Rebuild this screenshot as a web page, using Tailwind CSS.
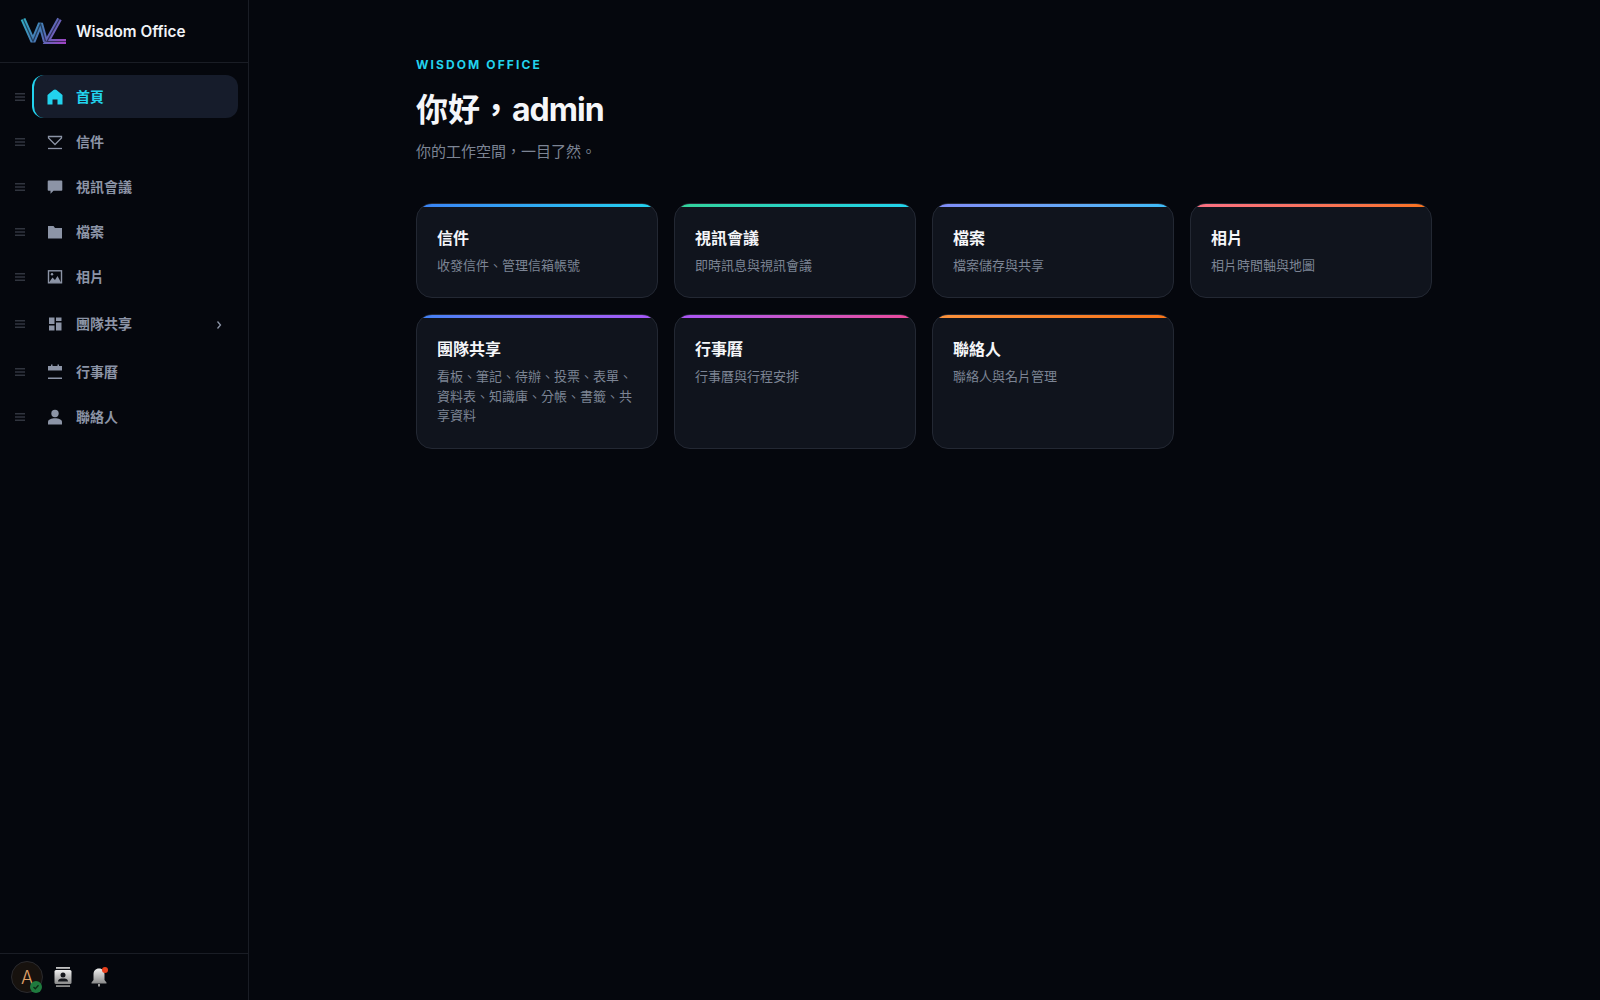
<!DOCTYPE html>
<html lang="zh-Hant">
<head>
    <meta charset="UTF-8">
    <title>Wisdom Office</title>
    <script src="https://cdn.jsdelivr.net/npm/@tailwindcss/browser@4"></script>
</head>
<body class="bg-[#05070d] font-['Inter','Noto_Sans_CJK_TC',sans-serif] h-[1000px] overflow-hidden flex">
    <!-- 側邊欄 -->
    <aside class="w-[249px] h-full shrink-0 border-r border-[#1a1d25] flex flex-col">
        <div class="h-[63px] border-b border-[#1a1d25] flex items-center pl-[20px] gap-[10px]">
            <svg class="w-[46px] h-[28px]" viewBox="0 0 46 28" fill="none">
                <defs>
                    <linearGradient id="logo" x1="0" y1="0" x2="46" y2="28" gradientUnits="userSpaceOnUse">
                        <stop offset="0" stop-color="#2fb3c4"/>
                        <stop offset="0.5" stop-color="#4a74b4"/>
                        <stop offset="1" stop-color="#a63fc4"/>
                    </linearGradient>
                </defs>
                <path d="M3 2L13 24.500L20.500 6.500L25.500 24.500" stroke="url(#logo)" stroke-width="5" stroke-linejoin="bevel"/>
                <path d="M39.500 2L27 24.500H46" stroke="url(#logo)" stroke-width="5" stroke-linejoin="miter"/>
                <path d="M3 2L13 24.500L20.500 6.500L25.500 24.500" stroke="#0b0f1a" stroke-opacity="0.6" stroke-width="1.200" stroke-linejoin="bevel"/>
                <path d="M39.500 2L27 24.500H46" stroke="#0b0f1a" stroke-opacity="0.6" stroke-width="1.200" stroke-linejoin="miter"/>
            </svg>
            <span class="text-[15.300px] font-semibold text-[#f1f3f7] translate-y-[1px]">Wisdom Office</span>
        </div>

        <nav class="flex flex-col pt-[12px] gap-[2px]">
            <!-- 首頁 -->
            <div class="flex items-center h-[43px]">
                <svg class="w-[32px] h-[12px] shrink-0 text-[#31353f]" viewBox="0 0 32 12" fill="currentColor"><rect x="15" y="2" width="10" height="1.500"/><rect x="15" y="5.250" width="10" height="1.500"/><rect x="15" y="8.500" width="10" height="1.500"/></svg>
                <a class="w-[206px] h-[43px] rounded-[12px] bg-[#161c2b] border-l-2 border-[#22d3ee] flex items-center pl-[12px] gap-[12px] text-[14px] font-semibold text-[#22d3ee]">
                    <svg class="w-[18px] h-[18px]" viewBox="0 0 18 18" fill="currentColor"><path d="M9 1.500C8.500 1.500 8 1.700 7.500 2.100L1.500 7V16.500H6.500V11.500H11.500V16.500H16.500V7L10.500 2.100C10 1.700 9.500 1.500 9 1.500Z"/></svg>
                    首頁
                </a>
            </div>
            <!-- 信件 -->
            <div class="flex items-center h-[43px]">
                <svg class="w-[32px] h-[12px] shrink-0 text-[#31353f]" viewBox="0 0 32 12" fill="currentColor"><rect x="15" y="2" width="10" height="1.500"/><rect x="15" y="5.250" width="10" height="1.500"/><rect x="15" y="8.500" width="10" height="1.500"/></svg>
                <a class="w-[206px] h-[43px] flex items-center pl-[14px] gap-[12px] text-[14px] font-semibold text-[#8c94a6]">
                    <svg class="w-[18px] h-[18px]" viewBox="0 0 18 18" fill="none" stroke="currentColor" stroke-width="1.300"><path d="M2.500 3.500H15.500V5L9 11.500L2.500 5Z"/><path d="M2 15.500H16"/></svg>
                    信件
                </a>
            </div>
            <!-- 視訊會議 -->
            <div class="flex items-center h-[43px]">
                <svg class="w-[32px] h-[12px] shrink-0 text-[#31353f]" viewBox="0 0 32 12" fill="currentColor"><rect x="15" y="2" width="10" height="1.500"/><rect x="15" y="5.250" width="10" height="1.500"/><rect x="15" y="8.500" width="10" height="1.500"/></svg>
                <a class="w-[206px] h-[43px] flex items-center pl-[14px] gap-[12px] text-[14px] font-semibold text-[#8c94a6]">
                    <svg class="w-[18px] h-[18px]" viewBox="0 0 18 18" fill="currentColor"><path d="M2.500 2.500H15.500C16 2.500 16.300 2.800 16.300 3.300V12C16.300 12.500 16 12.800 15.500 12.800H7.500L4.500 15.800V12.800H2.500C2 12.800 1.700 12.500 1.700 12V3.300C1.700 2.800 2 2.500 2.500 2.500Z"/></svg>
                    視訊會議
                </a>
            </div>
            <!-- 檔案 -->
            <div class="flex items-center h-[43px]">
                <svg class="w-[32px] h-[12px] shrink-0 text-[#31353f]" viewBox="0 0 32 12" fill="currentColor"><rect x="15" y="2" width="10" height="1.500"/><rect x="15" y="5.250" width="10" height="1.500"/><rect x="15" y="8.500" width="10" height="1.500"/></svg>
                <a class="w-[206px] h-[43px] flex items-center pl-[14px] gap-[12px] text-[14px] font-semibold text-[#8c94a6]">
                    <svg class="w-[18px] h-[18px]" viewBox="0 0 18 18" fill="currentColor"><path d="M2 3H7.500L9 5H16V15.500H2Z"/></svg>
                    檔案
                </a>
            </div>
            <!-- 相片 -->
            <div class="flex items-center h-[43px]">
                <svg class="w-[32px] h-[12px] shrink-0 text-[#31353f]" viewBox="0 0 32 12" fill="currentColor"><rect x="15" y="2" width="10" height="1.500"/><rect x="15" y="5.250" width="10" height="1.500"/><rect x="15" y="8.500" width="10" height="1.500"/></svg>
                <a class="w-[206px] h-[43px] flex items-center pl-[14px] gap-[12px] text-[14px] font-semibold text-[#8c94a6]">
                    <svg class="w-[18px] h-[18px]" viewBox="0 0 18 18" fill="none"><rect x="2.500" y="2.800" width="13" height="12" stroke="currentColor" stroke-width="1.400"/><path d="M3 14.500L6.500 9.500L9 12L11.500 8L15 14.500Z" fill="currentColor"/><circle cx="6" cy="6.300" r="1.200" fill="currentColor"/></svg>
                    相片
                </a>
            </div>
            <!-- 團隊共享 -->
            <div class="flex items-center h-[46px] mt-[1px]">
                <svg class="w-[32px] h-[12px] shrink-0 text-[#31353f]" viewBox="0 0 32 12" fill="currentColor"><rect x="15" y="2" width="10" height="1.500"/><rect x="15" y="5.250" width="10" height="1.500"/><rect x="15" y="8.500" width="10" height="1.500"/></svg>
                <a class="w-[206px] h-[46px] flex items-center pl-[14px] pr-[15px] gap-[12px] text-[14px] leading-[20px] font-semibold text-[#8c94a6]">
                    <svg class="w-[18px] h-[18px]" viewBox="0 0 18 18" fill="currentColor"><rect x="3" y="2.500" width="5.500" height="6.500"/><rect x="3" y="10.500" width="5.500" height="5"/><rect x="10" y="2.500" width="5.500" height="3.500"/><rect x="10" y="7.500" width="5.500" height="8"/></svg>
                    <span>團隊共享</span>
                    <svg class="w-[8px] h-[10px] ml-auto translate-y-[1px]" viewBox="0 0 8 10" fill="none" stroke="currentColor" stroke-width="1.300"><path d="M2.500 1.500L5.500 5L2.500 8.500"/></svg>
                </a>
            </div>
            <!-- 行事曆 -->
            <div class="flex items-center h-[43px] mt-[1px]">
                <svg class="w-[32px] h-[12px] shrink-0 text-[#31353f]" viewBox="0 0 32 12" fill="currentColor"><rect x="15" y="2" width="10" height="1.500"/><rect x="15" y="5.250" width="10" height="1.500"/><rect x="15" y="8.500" width="10" height="1.500"/></svg>
                <a class="w-[206px] h-[43px] flex items-center pl-[14px] gap-[12px] text-[14px] font-semibold text-[#8c94a6]">
                    <svg class="w-[18px] h-[18px]" viewBox="0 0 18 18" fill="currentColor"><path d="M5 1.500H6.500V3H11.500V1.500H13V3H16V7.500H2V3H5Z"/><rect x="2" y="14.500" width="14" height="1.500"/></svg>
                    行事曆
                </a>
            </div>
            <!-- 聯絡人 -->
            <div class="flex items-center h-[43px]">
                <svg class="w-[32px] h-[12px] shrink-0 text-[#31353f]" viewBox="0 0 32 12" fill="currentColor"><rect x="15" y="2" width="10" height="1.500"/><rect x="15" y="5.250" width="10" height="1.500"/><rect x="15" y="8.500" width="10" height="1.500"/></svg>
                <a class="w-[206px] h-[43px] flex items-center pl-[14px] gap-[12px] text-[14px] font-semibold text-[#8c94a6]">
                    <svg class="w-[18px] h-[18px]" viewBox="0 0 18 18" fill="currentColor"><circle cx="9" cy="5.500" r="3.700"/><path d="M2 16.500V14C2 11.500 5.500 10.300 9 10.300C12.500 10.300 16 11.500 16 14V16.500Z"/></svg>
                    聯絡人
                </a>
            </div>
        </nav>

        <!-- 底部工具列 -->
        <div class="mt-auto h-[47px] border-t border-[#1a1d25] flex items-center pl-[11px]">
            <div class="relative w-[32px] h-[32px] rounded-full bg-[#17120e] border border-[#2a2a2e] flex items-center justify-center text-[18px] font-light text-[#e0a36a]">
                A
                <span class="absolute right-[0px] bottom-[-1px] w-[12px] h-[12px] rounded-full bg-[#1f7a3e] flex items-center justify-center">
                    <svg class="w-[8px] h-[8px]" viewBox="0 0 8 8" fill="none" stroke="#0c2a16" stroke-width="1.300"><path d="M1.500 4L3.300 5.800L6.500 2.200"/></svg>
                </span>
            </div>
            <svg class="w-[20px] h-[22px] ml-[10px]" viewBox="0 0 20 22" fill="none">
                <defs>
                    <linearGradient id="metal" x1="0" y1="0" x2="0" y2="1">
                        <stop offset="0" stop-color="#f0f0f0"/>
                        <stop offset="1" stop-color="#8a8a8a"/>
                    </linearGradient>
                </defs>
                <rect x="3" y="1" width="14" height="1.800" fill="#c4c4c4"/>
                <rect x="1.500" y="4" width="17" height="14" rx="1.500" fill="url(#metal)"/>
                <circle cx="10" cy="9" r="2.500" fill="#15171c"/>
                <path d="M5 15.500C5 13 7.500 12.500 10 12.500C12.500 12.500 15 13 15 15.500Z" fill="#15171c"/>
                <rect x="3" y="19.200" width="14" height="1.800" fill="#8a8a8a"/>
            </svg>
            <div class="relative w-[20px] h-[22px] ml-[16px]">
                <svg class="w-[20px] h-[22px]" viewBox="0 0 20 22">
                    <defs>
                        <linearGradient id="metal2" x1="0" y1="0" x2="0" y2="1">
                            <stop offset="0" stop-color="#f0f0f0"/>
                            <stop offset="1" stop-color="#8a8a8a"/>
                        </linearGradient>
                    </defs>
                    <path d="M10 2.500C6.500 2.500 4.500 5 4.500 8.500V14L2.500 16.500V17.500H17.500V16.500L15.500 14V8.500C15.500 5 13.500 2.500 10 2.500Z" fill="url(#metal2)"/>
                    <rect x="9" y="18" width="2" height="2.500" fill="#999"/>
                </svg>
                <span class="absolute right-[1px] top-[1px] w-[6px] h-[6px] rounded-full bg-[#e8401c]"></span>
            </div>
        </div>
    </aside>

    <!-- 主內容 -->
    <main class="flex-1 min-w-0 pt-[57px] pl-[167px]">
        <div class="w-[1016px]">
            <p class="text-[12px] leading-[16px] font-bold tracking-[2.100px] text-[#22d3ee]">WISDOM OFFICE</p>
            <h1 class="mt-[17px] text-[32px] leading-[40px] font-bold text-[#f5f6f9]">你好，<span class="tracking-[-1px]">admin</span></h1>
            <p class="mt-[11px] text-[15px] leading-[22px] text-[#7c8494]">你的工作空間，一目了然。</p>

            <div class="mt-[40px] grid grid-cols-4 gap-[16px]">
                <div class="relative overflow-hidden h-[95px] rounded-[16px] bg-[#10141d] border border-[#232833] px-[20px] pt-[22px]">
                    <div class="absolute inset-x-0 top-0 h-[3px] bg-gradient-to-r from-[#3b82f6] to-[#22d3ee]"></div>
                    <h2 class="text-[16px] leading-[24px] font-bold text-[#f5f6f9]">信件</h2>
                    <p class="mt-[6px] text-[13px] leading-[19.500px] text-[#7c8494]">收發信件、管理信箱帳號</p>
                </div>
                <div class="relative overflow-hidden h-[95px] rounded-[16px] bg-[#10141d] border border-[#232833] px-[20px] pt-[22px]">
                    <div class="absolute inset-x-0 top-0 h-[3px] bg-gradient-to-r from-[#34d399] to-[#22d3ee]"></div>
                    <h2 class="text-[16px] leading-[24px] font-bold text-[#f5f6f9]">視訊會議</h2>
                    <p class="mt-[6px] text-[13px] leading-[19.500px] text-[#7c8494]">即時訊息與視訊會議</p>
                </div>
                <div class="relative overflow-hidden h-[95px] rounded-[16px] bg-[#10141d] border border-[#232833] px-[20px] pt-[22px]">
                    <div class="absolute inset-x-0 top-0 h-[3px] bg-gradient-to-r from-[#818cf8] to-[#38bdf8]"></div>
                    <h2 class="text-[16px] leading-[24px] font-bold text-[#f5f6f9]">檔案</h2>
                    <p class="mt-[6px] text-[13px] leading-[19.500px] text-[#7c8494]">檔案儲存與共享</p>
                </div>
                <div class="relative overflow-hidden h-[95px] rounded-[16px] bg-[#10141d] border border-[#232833] px-[20px] pt-[22px]">
                    <div class="absolute inset-x-0 top-0 h-[3px] bg-gradient-to-r from-[#fb7185] to-[#f97316]"></div>
                    <h2 class="text-[16px] leading-[24px] font-bold text-[#f5f6f9]">相片</h2>
                    <p class="mt-[6px] text-[13px] leading-[19.500px] text-[#7c8494]">相片時間軸與地圖</p>
                </div>
                <div class="relative overflow-hidden h-[135px] rounded-[16px] bg-[#10141d] border border-[#232833] px-[20px] pt-[22px]">
                    <div class="absolute inset-x-0 top-0 h-[3px] bg-gradient-to-r from-[#3b82f6] to-[#a855f7]"></div>
                    <h2 class="text-[16px] leading-[24px] font-bold text-[#f5f6f9]">團隊共享</h2>
                    <p class="mt-[6px] text-[13px] leading-[19.500px] text-[#7c8494]">看板、筆記、待辦、投票、表單、資料表、知識庫、分帳、書籤、共享資料</p>
                </div>
                <div class="relative overflow-hidden h-[135px] rounded-[16px] bg-[#10141d] border border-[#232833] px-[20px] pt-[22px]">
                    <div class="absolute inset-x-0 top-0 h-[3px] bg-gradient-to-r from-[#a855f7] to-[#ec4899]"></div>
                    <h2 class="text-[16px] leading-[24px] font-bold text-[#f5f6f9]">行事曆</h2>
                    <p class="mt-[6px] text-[13px] leading-[19.500px] text-[#7c8494]">行事曆與行程安排</p>
                </div>
                <div class="relative overflow-hidden h-[135px] rounded-[16px] bg-[#10141d] border border-[#232833] px-[20px] pt-[22px]">
                    <div class="absolute inset-x-0 top-0 h-[3px] bg-gradient-to-r from-[#fb923c] to-[#f97316]"></div>
                    <h2 class="text-[16px] leading-[24px] font-bold text-[#f5f6f9]">聯絡人</h2>
                    <p class="mt-[6px] text-[13px] leading-[19.500px] text-[#7c8494]">聯絡人與名片管理</p>
                </div>
            </div>
        </div>
    </main>
</body>
</html>
